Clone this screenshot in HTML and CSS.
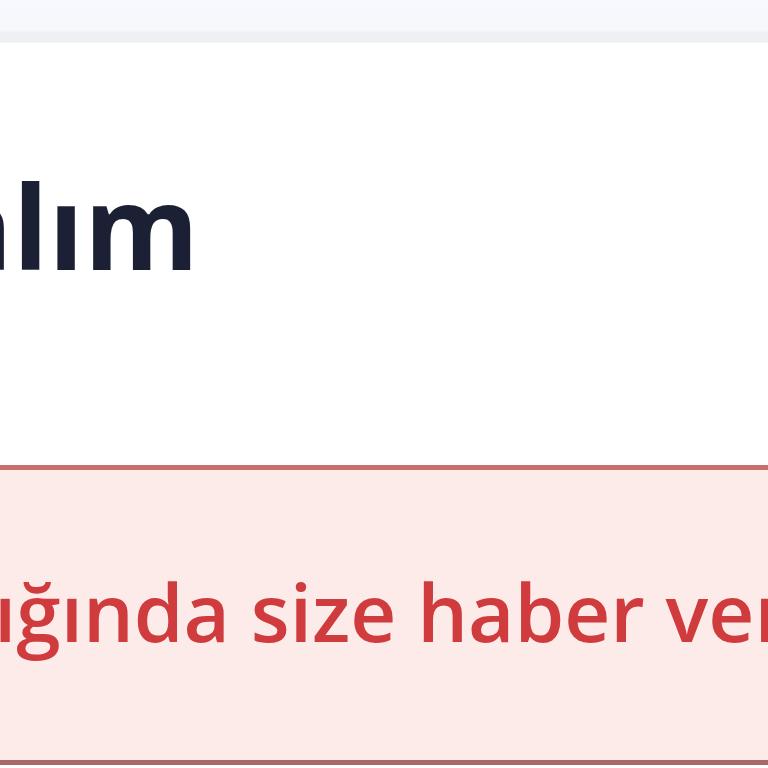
FILE: index.html
```html
<!DOCTYPE html>
<html lang="tr">
<head>
<meta charset="utf-8">
<link rel="stylesheet" href="styles.css">
</head>
<body>
<header class="topbar"></header>
<main class="content">
  <h1 class="title"><span class="title-text">alım</span></h1>
  <div class="alert">
    <p class="alert-text">ığında size haber ver</p>
  </div>
</main>
</body>
</html>
```
FILE: styles.css
```css
html, body {
  margin: 0;
  padding: 0;
  background: #ffffff;
  overflow: hidden;
}
body {
  width: 768px;
  height: 768px;
  font-family: "Open Sans", "Noto Sans", sans-serif;
}
.topbar {
  height: 43px;
  background: linear-gradient(#f8f9fe 0, #f6f7fb 31px, #eff0f3 32px, #eef0f2 42px, #f7f9f9 43px);
}
.content {
  overflow: hidden;
}
.title {
  margin: 0;
  padding-top: 123px;
  height: 299px;
  font-size: 117px;
  font-weight: 700;
  line-height: 1;
  color: #1c2034;
  white-space: nowrap;
}
.title-text {
  display: inline-block;
  margin-left: -58px;
}
.alert {
  height: 300px;
  background: #fdebea;
  border-top: 5px solid #c8706e;
  border-bottom: 5px solid #a86a68;
  box-sizing: border-box;
  overflow: hidden;
}
.alert-text {
  margin: 0;
  padding-top: 101px;
  font-size: 80px;
  line-height: 1;
  font-weight: 600;
  color: #d03c3e;
  white-space: nowrap;
  margin-left: -6px;
}
```
